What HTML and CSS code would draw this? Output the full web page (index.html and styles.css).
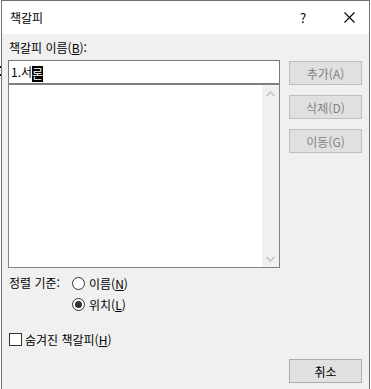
FILE: index.html
```html
<!DOCTYPE html>
<html lang="ko">
<head>
    <meta charset="UTF-8">
    <meta name="viewport" content="width=device-width, initial-scale=1.0">
    <title>책갈피</title>
    <link rel="stylesheet" href="styles.css">
</head>
<body>
    <div class="dialog">
        <div class="titlebar">
            <span class="title">책갈피</span>
            <span class="caption help">?</span>
            <span class="caption close">
                <svg width="11" height="11" viewBox="0 0 11 11">
                    <path d="M0.5 0.5 L10.5 10.5 M10.5 0.5 L0.5 10.5" stroke="#000" stroke-width="1.1" fill="none"/>
                </svg>
            </span>
        </div>

        <div class="content">
            <div class="main">
                <div class="left">
                    <div class="field-label">책갈피 이름(<u>B</u>):</div>
                    <div class="name-input">1.서<span class="sel">론</span></div>
                    <div class="listbox">
                        <div class="list-items"></div>
                        <div class="scrollbar">
                            <span class="arrow">
                                <svg width="9" height="6" viewBox="0 0 9 6"><path d="M0.5 5 L4.5 1 L8.5 5" stroke="#c2c2c2" stroke-width="1.4" fill="none"/></svg>
                            </span>
                            <span class="arrow">
                                <svg width="9" height="6" viewBox="0 0 9 6"><path d="M0.5 1 L4.5 5 L8.5 1" stroke="#c2c2c2" stroke-width="1.4" fill="none"/></svg>
                            </span>
                        </div>
                    </div>

                    <div class="sort">
                        <span class="sort-label">정렬 기준:</span>
                        <label class="option"><span class="radio"></span><span>이름(<u>N</u>)</span></label>
                        <span></span>
                        <label class="option"><span class="radio checked"></span><span>위치(<u>L</u>)</span></label>
                    </div>

                    <label class="option hidden-marks"><span class="checkbox"></span><span>숨겨진 책갈피(<u>H</u>)</span></label>
                </div>

                <div class="buttons">
                    <button class="btn" disabled>추가(A)</button>
                    <button class="btn" disabled>삭제(D)</button>
                    <button class="btn" disabled>이동(G)</button>
                </div>
            </div>

            <div class="footer">
                <button class="btn">취소</button>
            </div>
        </div>
    </div>
</body>
</html>
```

FILE: styles.css
```css
body {
    margin: 0;
    background: linear-gradient(#000, #000) 0 66px / 1px 2px no-repeat,
                linear-gradient(#000, #000) 0 74px / 1px 2px no-repeat,
                #fff;
    font-family: "Noto Sans CJK KR", "Noto Sans", sans-serif;
    font-size: 12px;
    color: #000;
}

.dialog {
    margin-left: 1px;
    width: 369px;
    min-height: 389px;
    box-sizing: border-box;
    border: 1px solid #6f6f6f;
    border-bottom: none;
    background: #f0f0f0;
}

.titlebar {
    height: 33px;
    background: #fff;
    display: flex;
    align-items: center;
}
.title {
    flex: 1;
    padding-left: 8px;
}
.caption {
    width: 40px;
    height: 33px;
    display: flex;
    align-items: center;
    justify-content: center;
}
.help {
    margin-right: 6px;
    font-size: 13px;
}

.content {
    padding: 5px 7px 0 6px;
}

.main {
    display: grid;
    grid-template-columns: 272px 73px;
    column-gap: 9px;
}

.field-label {
    line-height: 18px;
    height: 18px;
    padding-left: 1px;
    margin-bottom: 3px;
}

u {
    text-decoration: underline;
    text-underline-offset: 1px;
}

.name-input {
    height: 24px;
    box-sizing: border-box;
    border: 1px solid #7a7a7a;
    background: #fff;
    padding-left: 2px;
    line-height: 22px;
}
.sel {
    display: inline-block;
    background: #000;
    color: #fff;
    line-height: 16px;
    height: 16px;
    vertical-align: middle;
}

.listbox {
    height: 184px;
    box-sizing: border-box;
    border: 1px solid #828282;
    background: #fff;
    display: flex;
}
.list-items {
    flex: 1;
}
.scrollbar {
    width: 17px;
    background: #f0f0f0;
    display: flex;
    flex-direction: column;
    justify-content: space-between;
}
.arrow {
    height: 17px;
    display: flex;
    align-items: center;
    justify-content: center;
}

.sort {
    margin-top: 5px;
    display: grid;
    grid-template-columns: 64px auto;
    grid-auto-rows: 20px;
    row-gap: 1px;
}
.sort-label {
    padding-left: 1px;
    line-height: 20px;
}

.option {
    display: flex;
    align-items: center;
    gap: 4px;
    height: 20px;
}

.radio {
    width: 13px;
    height: 13px;
    box-sizing: border-box;
    border: 1px solid #333;
    border-radius: 50%;
    background: #fff;
    display: flex;
    align-items: center;
    justify-content: center;
}
.radio.checked::after {
    content: "";
    width: 7px;
    height: 7px;
    border-radius: 50%;
    background: #333;
}

.hidden-marks {
    margin-top: 15px;
    padding-left: 1px;
    gap: 3px;
}
.checkbox {
    width: 13px;
    height: 13px;
    box-sizing: border-box;
    border: 1px solid #333;
    background: #fff;
}

.buttons {
    padding-top: 22px;
    display: flex;
    flex-direction: column;
    gap: 10px;
}

.btn {
    width: 73px;
    height: 24px;
    padding: 0;
    box-sizing: border-box;
    border: 1px solid #adadad;
    border-radius: 0;
    background: #e1e1e1;
    color: #000;
    font-family: inherit;
    font-size: 12px;
}
.btn:disabled {
    border-color: #bfbfbf;
    background: #e0e0e0;
    color: #838383;
}

.footer {
    margin-top: 10px;
    display: flex;
    justify-content: flex-end;
}
```
